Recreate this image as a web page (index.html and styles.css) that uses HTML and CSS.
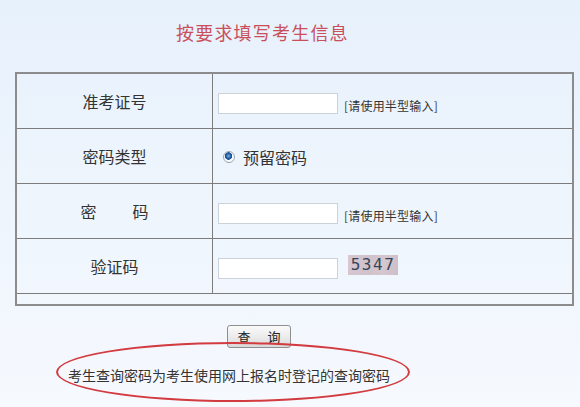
FILE: index.html
```html
<!DOCTYPE html>
<html lang="zh-CN">
<head>
<meta charset="utf-8">
<title>按要求填写考生信息</title>
<link rel="stylesheet" href="styles.css">
</head>
<body>
<div class="page">
  <h1 class="title">按要求填写考生信息</h1>
  <table class="form">
    <tr>
      <td class="label">准考证号</td>
      <td class="field"><input class="text" type="text"><span class="hint">[请使用半型输入]</span></td>
    </tr>
    <tr>
      <td class="label">密码类型</td>
      <td class="field"><span class="radio"></span><span class="option">预留密码</span></td>
    </tr>
    <tr>
      <td class="label"><span class="spread">密</span><span>码</span></td>
      <td class="field"><input class="text" type="password"><span class="hint">[请使用半型输入]</span></td>
    </tr>
    <tr>
      <td class="label">验证码</td>
      <td class="field"><input class="text" type="text"><span class="captcha">5347</span></td>
    </tr>
    <tr class="spacer">
      <td colspan="2"></td>
    </tr>
  </table>
  <div class="actions">
    <button class="query" type="button"><span>查</span><span>询</span></button>
  </div>
  <p class="note">考生查询密码为考生使用网上报名时登记的查询密码</p>
  <div class="ring"></div>
</div>
</body>
</html>
```
FILE: styles.css
```css
html, body {
  margin: 0;
  padding: 0;
}
body {
  width: 580px;
  height: 407px;
  overflow: hidden;
  background: linear-gradient(to bottom, #e7f1fc 0%, #eef5fd 50%, #f6f9fe 100%);
  font-family: "Noto Sans CJK SC", "Noto Sans", sans-serif;
  color: #333;
}
.page {
  position: relative;
  padding-top: 20px;
}
.title {
  margin: 0;
  padding-left: 176px;
  height: 24px;
  line-height: 24px;
  font-size: 18px;
  font-weight: normal;
  letter-spacing: 1.2px;
  color: #c9505b;
}
.form {
  margin: 28px 0 0 15px;
  width: 559px;
  border-collapse: collapse;
  border: 2px solid #8c8c8c;
}
.form td {
  border: 1px solid #7c7c7c;
  padding: 0;
  height: 54px;
}
.form .label {
  width: 195px;
  text-align: center;
  font-size: 16px;
  color: #333;
}
.spread {
  margin-right: 36px;
}
.form .field {
  padding-left: 5px;
}
.text {
  box-sizing: border-box;
  width: 120px;
  height: 21px;
  border: 1px solid #cbd2da;
  background: #fff;
  margin: 0;
  padding: 0 2px;
  vertical-align: middle;
}
.hint {
  margin-left: 6px;
  font-size: 12px;
  letter-spacing: 0.2px;
  color: #333;
  vertical-align: middle;
  position: relative;
  top: 2px;
}
.radio {
  display: inline-block;
  box-sizing: border-box;
  width: 12px;
  height: 12px;
  margin-left: 5px;
  border-radius: 50%;
  border: 1px solid #9aa6b2;
  background: radial-gradient(circle at 45% 40%, #7fb6e6 0, #2a6bb0 2px, #1b4f8a 3.5px, #f4f7fa 4px, #ffffff 6px);
  vertical-align: middle;
}
.option {
  margin-left: 8px;
  font-size: 16px;
  vertical-align: middle;
}
.captcha {
  display: inline-block;
  margin-left: 10px;
  width: 50px;
  height: 20px;
  line-height: 20px;
  text-align: center;
  background: linear-gradient(100deg, #d9c7cf 0%, #cfc2cc 40%, #d6c6cd 70%, #cdbfca 100%);
  font-family: "DejaVu Sans Mono", monospace;
  font-size: 16px;
  letter-spacing: 1.5px;
  color: #34455a;
  vertical-align: middle;
  position: relative;
  top: -3px;
}
.form .spacer td {
  height: 10px;
}
.actions {
  margin-top: 19px;
  padding-left: 227px;
  height: 23px;
}
.query {
  display: flex;
  justify-content: center;
  align-items: center;
  gap: 17px;
  box-sizing: border-box;
  width: 64px;
  height: 23px;
  margin: 0;
  padding: 0;
  border: 1px solid #8e8e8e;
  border-radius: 3px;
  background: linear-gradient(to bottom, #fafafa 0%, #ececec 50%, #d9d9d9 100%);
  font-family: "Noto Sans CJK SC", sans-serif;
  font-size: 13px;
  color: #222;
}
.note {
  margin: 17px 0 0 0;
  padding-left: 68px;
  line-height: 20px;
  font-size: 14px;
  color: #333;
}
.ring {
  position: absolute;
  left: 56px;
  top: 342px;
  width: 354px;
  height: 60px;
  box-sizing: border-box;
  border: 2px solid #d23b3f;
  border-radius: 50%;
}
```
